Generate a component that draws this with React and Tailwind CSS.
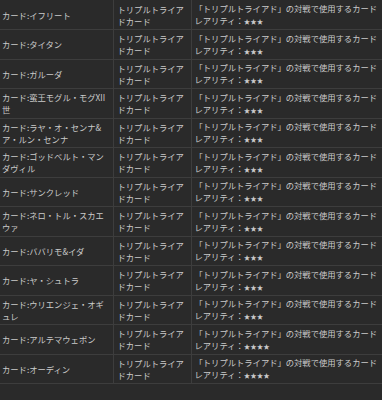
import React from 'react';

const cards = [
  { name: "カード:イフリート", stars: 3 },
  { name: "カード:タイタン", stars: 3 },
  { name: "カード:ガルーダ", stars: 3 },
  { name: "カード:蛮王モグル・モグXII世", stars: 3 },
  { name: "カード:ラヤ・オ・センナ&ア・ルン・センナ", stars: 3 },
  { name: "カード:ゴッドベルト・マンダヴィル", stars: 3 },
  { name: "カード:サンクレッド", stars: 3 },
  { name: "カード:ネロ・トル・スカエウァ", stars: 3 },
  { name: "カード:ババリモ&イダ", stars: 3 },
  { name: "カード:ヤ・シュトラ", stars: 3 },
  { name: "カード:ウリエンジェ・オギュレ", stars: 3 },
  { name: "カード:アルテマウェポン", stars: 4 },
  { name: "カード:オーディン", stars: 4 },
];

const App = () => {
  return (
    <div
      className="w-[382px] h-[400px] overflow-hidden bg-[#2a2a2a] text-[#cacaca] text-[8.3px] leading-[12px]"
      style={{ fontFamily: '"Noto Sans CJK JP", "Noto Sans", sans-serif' }}
    >
      <table className="w-full border-collapse table-fixed">
        <colgroup>
          <col className="w-[113px]" />
          <col className="w-[78px]" />
          <col />
        </colgroup>
        <tbody>
          {cards.map((c, i) => (
            <tr key={i} className="border-b border-[#3d3d3d] h-[29.5px]">
              <td className="pl-[2px] pr-[3px] py-0 align-middle border-r border-[#3d3d3d]">
                {c.name}
              </td>
              <td className="pl-[4px] pr-[2px] py-0 align-middle border-r border-[#3d3d3d]">
                トリプルトライアドカード
              </td>
              <td className="pl-[3px] pr-0 py-0 align-middle whitespace-nowrap">
                <div>「トリプルトライアド」の対戦で使用するカード</div>
                <div>
                  レアリティ：<span className="text-[6.5px]">{"★".repeat(c.stars)}</span>
                </div>
              </td>
            </tr>
          ))}
        </tbody>
      </table>
    </div>
  );
};

export default App;
